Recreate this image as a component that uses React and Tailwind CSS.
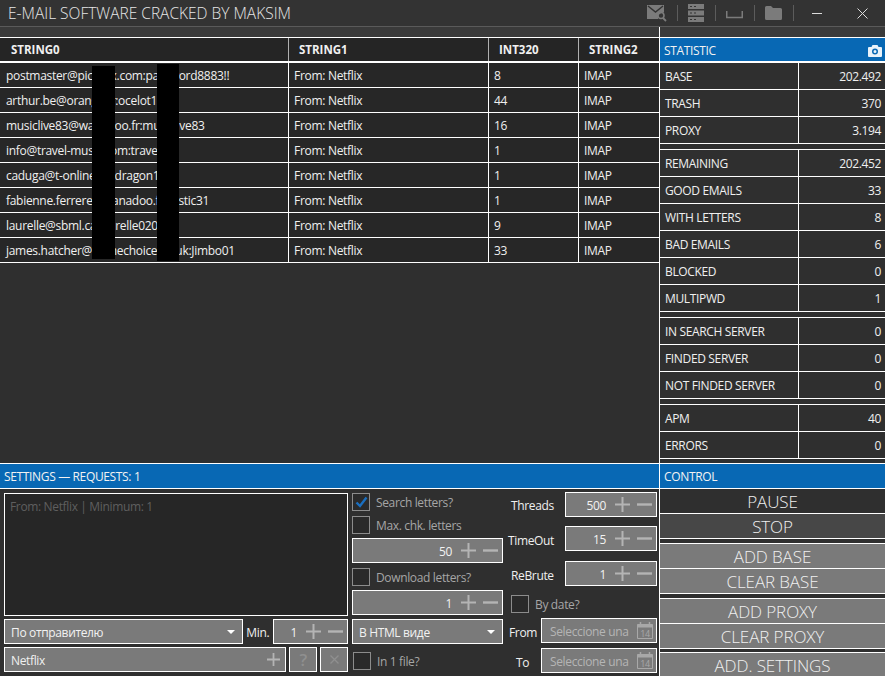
import React from 'react';

const font = { fontFamily: '"Open Sans", "Noto Sans", sans-serif' };

const rows = [
  ['postmaster@picxxxx.com:password8883!!', 'From: Netflix', '8', 'IMAP'],
  ['arthur.be@orange.fr:ocelot12', 'From: Netflix', '44', 'IMAP'],
  ['musiclive83@wanadoo.fr:musiclive83', 'From: Netflix', '16', 'IMAP'],
  ['info@travel-music.com:travel', 'From: Netflix', '1', 'IMAP'],
  ['caduga@t-online.de:dragon1', 'From: Netflix', '1', 'IMAP'],
  ['fabienne.ferrere@wanadoo.fr:rustic31', 'From: Netflix', '1', 'IMAP'],
  ['laurelle@sbml.ca:laurelle020', 'From: Netflix', '9', 'IMAP'],
  ['james.hatcher@homechoice.co.uk:Jimbo01', 'From: Netflix', '33', 'IMAP'],
];

const statGroups = [
  [['BASE', '202.492'], ['TRASH', '370'], ['PROXY', '3.194']],
  [['REMAINING', '202.452'], ['GOOD EMAILS', '33'], ['WITH LETTERS', '8'], ['BAD EMAILS', '6'], ['BLOCKED', '0'], ['MULTIPWD', '1']],
  [['IN SEARCH SERVER', '0'], ['FINDED SERVER', '0'], ['NOT FINDED SERVER', '0']],
  [['APM', '40'], ['ERRORS', '0']],
];

function Stepper({ value, className }) {
  return (
    <div className={`flex items-center justify-end h-[25px] border border-white bg-[#7a7a7a] text-[12px] text-[#f2f2f2] pr-[4px] ${className}`}>
      <span className="pt-[2px]">{value}</span>
      <svg width="15" height="15" viewBox="0 0 15 15" className="ml-[9px] shrink-0">
        <path d="M7.5 0v15M0 7.5h15" stroke="#b4b4b4" strokeWidth="2" />
      </svg>
      <svg width="15" height="15" viewBox="0 0 15 15" className="ml-[7px] shrink-0">
        <path d="M0 7.5h15" stroke="#b4b4b4" strokeWidth="2.4" />
      </svg>
    </div>
  );
}

function Check({ label, checked, className }) {
  return (
    <div className={`flex items-center h-[18px] text-[12px] text-[#a6a6a6] ${className}`}>
      <div className="w-[18px] h-[18px] border border-[#8c8c8c] bg-[#2a2a2a] flex items-center justify-center shrink-0">
        {checked && (
          <svg width="13" height="12" viewBox="0 0 13 12">
            <path d="M1.5 6.5 L5 10 L11.5 1.5" fill="none" stroke="#1a6fc0" strokeWidth="2.4" />
          </svg>
        )}
      </div>
      <span className="ml-[6px] pt-[2px]">{label}</span>
    </div>
  );
}

function Select({ label, className }) {
  return (
    <div className={`flex items-center justify-between h-[25px] border border-white bg-[#7a7a7a] text-[12px] text-[#f2f2f2] pl-[6px] pr-[7px] ${className}`}>
      <span className="pt-[2px]">{label}</span>
      <div className="w-0 h-0 border-l-[4px] border-r-[4px] border-t-[4px] border-l-transparent border-r-transparent border-t-white" />
    </div>
  );
}

function CalendarIcon() {
  return (
    <svg width="16" height="17" viewBox="0 0 16 17" className="shrink-0">
      <path d="M.5 2.5h15v14H.5z" fill="none" stroke="#a8a8a8" />
      <path d="M.5 2.5h15v3H.5z" fill="#a8a8a8" />
      <path d="M3.5 0v3M12.5 0v3" stroke="#a8a8a8" strokeWidth="1.5" />
      <text x="8" y="14.5" textAnchor="middle" fontSize="9" fill="#a8a8a8" fontFamily="Open Sans">14</text>
    </svg>
  );
}

function DateInput({ className }) {
  return (
    <div className={`flex items-center justify-between w-[116px] h-[25px] border border-white bg-[#7a7a7a] text-[12px] text-[#b5b5b5] pl-[8px] pr-[3px] ${className}`}>
      <span className="whitespace-nowrap pt-[2px]">Seleccione una</span>
      <CalendarIcon />
    </div>
  );
}

function TitleIcons() {
  const c = '#7b7b7b';
  return (
    <div className="flex items-center">
      <svg width="20" height="18" viewBox="0 0 20 18" className="ml-[647px]">
        <path d="M0 1h17v7.5a5.5 5.5 0 0 0-6 6.5H0z" fill={c} />
        <path d="M1 2l7.5 6L16 2" fill="none" stroke="#333" strokeWidth="1.4" />
        <circle cx="14" cy="11.5" r="3" fill="none" stroke={c} strokeWidth="1.6" />
        <path d="M16 14l3 3" stroke={c} strokeWidth="1.8" />
      </svg>
      <div className="w-px h-[16px] bg-[#5c5c5c] ml-[10px]" />
      <svg width="16" height="18" viewBox="0 0 16 18" className="ml-[10px]">
        <rect y="0" width="16" height="5" fill={c} />
        <rect y="6.5" width="16" height="5" fill={c} />
        <rect y="13" width="16" height="5" fill={c} />
        <path d="M2 2.5h2M6 2.5h2M2 9h2M6 9h2M2 15.5h2M6 15.5h2" stroke="#333" strokeWidth="1" />
      </svg>
      <div className="w-px h-[16px] bg-[#5c5c5c] ml-[11px]" />
      <svg width="17" height="8" viewBox="0 0 17 8" className="ml-[10px] mt-[4px]">
        <path d="M.75 0v6.5h15.5V0" fill="none" stroke={c} strokeWidth="1.5" />
      </svg>
      <div className="w-px h-[16px] bg-[#5c5c5c] ml-[11px]" />
      <svg width="17" height="14" viewBox="0 0 17 14" className="ml-[10px]">
        <path d="M0 1.5A1.5 1.5 0 0 1 1.5 0H6l2 2h7.5A1.5 1.5 0 0 1 17 3.5v9a1.5 1.5 0 0 1-1.5 1.5h-14A1.5 1.5 0 0 1 0 12.5z" fill={c} />
      </svg>
      <div className="w-px h-[16px] bg-[#5c5c5c] ml-[11px]" />
      <div className="w-[10px] h-px bg-[#dcdcdc] ml-[18px]" />
      <svg width="11" height="11" viewBox="0 0 11 11" className="ml-[35px]">
        <path d="M.5.5l10 10M10.5.5l-10 10" stroke="#dcdcdc" strokeWidth="1" />
      </svg>
    </div>
  );
}

function BlueBar({ children }) {
  return (
    <div className="flex items-center justify-between bg-[#0868b4] text-[12px] text-[#f2f2f2] pl-[4px] pt-[2px] h-[24px] shrink-0">
      {children}
    </div>
  );
}

function CtrlButton({ label, className }) {
  return (
    <div className={`flex items-center justify-center border-b border-white pt-[2px] text-[17px] font-light tracking-[-0.1px] text-[#f0f0f0] whitespace-nowrap ${className}`}>
      {label}
    </div>
  );
}

export default function App() {
  return (
    <div className="w-[885px] h-[676px] overflow-hidden bg-[#2f2f2f] relative tracking-[-0.35px]" style={font}>
      {/* title bar */}
      <div className="relative flex items-center h-[27px] bg-[#333333] border-b border-[#5a5a5a]">
        <span className="absolute left-[8px] top-[2px] text-[15.5px] font-light tracking-normal text-[#e6e6e6] whitespace-nowrap">E-MAIL SOFTWARE CRACKED BY MAKSIM</span>
        <TitleIcons />
      </div>

      <div className="flex h-[649px]">
        {/* left */}
        <div className="flex flex-col w-[660px] shrink-0 border-r border-white">
          <div className="h-[10px] bg-[#3a3a3a] shrink-0" />
          <div className="h-[426px] shrink-0 bg-[#2f2f2f] border-t border-white">
            <div className="flex h-[25px] bg-[#252525] border-b-[2px] border-white text-[11.5px] font-bold tracking-normal text-[#f0f0f0] items-center">
              <div className="w-[289px] pl-[11px] h-full flex items-center border-r border-[#b0b0b0]">STRING0</div>
              <div className="w-[200px] pl-[10px] h-full flex items-center border-r border-[#b0b0b0]">STRING1</div>
              <div className="w-[90px] pl-[10px] h-full flex items-center border-r border-[#b0b0b0]">INT320</div>
              <div className="flex-1 pl-[10px] h-full flex items-center">STRING2</div>
            </div>
            {rows.map((r) => (
              <div key={r[0]} className="flex h-[25px] bg-[#272727] border-b border-white text-[12px] tracking-[-0.3px] text-[#f0f0f0] items-center whitespace-nowrap">
                <div className="w-[289px] pl-[6px] pt-[2px] h-full flex items-center border-r border-white">{r[0]}</div>
                <div className="w-[200px] pl-[5px] pt-[2px] h-full flex items-center border-r border-white">{r[1]}</div>
                <div className="w-[90px] pl-[5px] pt-[2px] h-full flex items-center border-r border-white">{r[2]}</div>
                <div className="flex-1 pl-[5px] pt-[2px] h-full flex items-center">{r[3]}</div>
              </div>
            ))}
          </div>

          <div className="border-t border-white shrink-0">
            <BlueBar>SETTINGS — REQUESTS: 1</BlueBar>
          </div>

          <div className="flex flex-1 border-t border-white pt-[4px] pl-[4px] text-[12px] text-[#f0f0f0]">
            {/* requests column */}
            <div className="w-[344px] shrink-0">
              <div className="h-[123px] border border-white bg-[#262626] text-[#5f5f5f] px-[5px] py-[4px]">From: Netflix | Minimum: 1</div>
              <div className="flex items-center mt-[3px]">
                <Select label="По отправителю" className="w-[240px]" />
                <span className="ml-[3px] w-[27px] pt-[3px]">Min.</span>
                <Stepper value="1" className="w-[75px]" />
              </div>
              <div className="flex items-center mt-[3px]">
                <div className="flex items-center justify-between w-[283px] h-[25px] border border-white bg-[#7a7a7a] pl-[6px] pr-[5px]">
                  <span className="pt-[3px]">Netflix</span>
                  <svg width="13" height="13" viewBox="0 0 13 13">
                    <path d="M6.5 0v13M0 6.5h13" stroke="#b4b4b4" strokeWidth="1.8" />
                  </svg>
                </div>
                <div className="w-[28px] h-[25px] ml-[3px] border border-white bg-[#7a7a7a] text-[#8f8f8f] text-[17px] font-semibold flex items-center justify-center">?</div>
                <div className="w-[28px] h-[25px] ml-[3px] border border-white bg-[#7a7a7a] flex items-center justify-center">
                  <svg width="9" height="9" viewBox="0 0 9 9">
                    <path d="M.5.5l8 8M8.5.5l-8 8" stroke="#8f8f8f" strokeWidth="1.3" />
                  </svg>
                </div>
              </div>
            </div>

            {/* letters column */}
            <div className="w-[151px] ml-[4px] shrink-0">
              <Check label="Search letters?" checked />
              <Check label="Max. chk. letters" className="mt-[5px]" />
              <Stepper value="50" className="mt-[4px]" />
              <Check label="Download letters?" className="mt-[5px]" />
              <Stepper value="1" className="mt-[4px]" />
              <Select label="В HTML виде" className="mt-[4px]" />
              <Check label="In 1 file?" className="mt-[8px] ml-px" />
            </div>

            {/* limits column */}
            <div className="w-[149px] ml-[5px] shrink-0">
              <div className="flex items-center -mt-[1px]">
                <span className="w-[57px] pl-[3px] pt-[2px]">Threads</span>
                <Stepper value="500" className="w-[92px]" />
              </div>
              <div className="flex items-center mt-[9px]">
                <span className="w-[57px] pt-[4px]">TimeOut</span>
                <Stepper value="15" className="w-[92px]" />
              </div>
              <div className="flex items-center mt-[10px]">
                <span className="w-[57px] pl-[3px] pt-[4px]">ReBrute</span>
                <Stepper value="1" className="w-[92px]" />
              </div>
              <Check label="By date?" className="mt-[9px] ml-[3px]" />
              <div className="flex items-center mt-[5px]">
                <span className="w-[33px] pl-px pt-[5px]">From</span>
                <DateInput />
              </div>
              <div className="flex items-center mt-[5px]">
                <span className="w-[33px] pl-[8px] pt-[4px]">To</span>
                <DateInput />
              </div>
            </div>
          </div>
        </div>

        {/* right */}
        <div className="flex flex-col flex-1 min-w-0">
          <div className="h-[10px] bg-[#3a3a3a] shrink-0" />
          <div className="border-t border-white h-[426px] shrink-0">
            <div className="flex items-center justify-between bg-[#0868b4] text-[12px] text-[#f2f2f2] pl-[4px] pr-[3px] pt-[2px] h-[23px]">
              <span>STATISTIC</span>
              <svg width="14" height="12" viewBox="0 0 14 12">
                <path fillRule="evenodd" d="M4.5 0h5l1 2H13a1 1 0 0 1 1 1v8a1 1 0 0 1-1 1H1a1 1 0 0 1-1-1V3a1 1 0 0 1 1-1h2.5zM7 3.5a3 3 0 1 0 0 6 3 3 0 0 0 0-6zM7 5a1.5 1.5 0 1 1 0 3 1.5 1.5 0 0 1 0-3z" fill="#e8f2fa" />
              </svg>
            </div>
            {statGroups.map((group, i) => (
              <div key={i} className={i === 0 ? 'border-t-[2px] border-white' : 'border-t border-white mt-[5px]'}>
                {group.map(([k, v]) => (
                  <div key={k} className="flex h-[27px] border-b border-white bg-[#2f2f2f] text-[12px] text-[#f0f0f0] items-center whitespace-nowrap">
                    <div className="w-[139px] h-full pl-[5px] pt-[2px] flex items-center border-r border-white">{k}</div>
                    <div className="flex-1 h-full pr-[4px] pt-[2px] flex items-center justify-end">{v}</div>
                  </div>
                ))}
              </div>
            ))}
          </div>
          <div className="border-t border-white shrink-0">
            <BlueBar>CONTROL</BlueBar>
          </div>
          <div className="border-t border-white flex-1">
            <CtrlButton label="PAUSE" className="h-[25px] bg-[#2f2f2f]" />
            <CtrlButton label="STOP" className="h-[25px] bg-[#474747]" />
            <CtrlButton label="ADD BASE" className="h-[26px] bg-[#7a7a7a] border-t mt-[4px]" />
            <CtrlButton label="CLEAR BASE" className="h-[25px] bg-[#7a7a7a]" />
            <CtrlButton label="ADD PROXY" className="h-[26px] bg-[#7a7a7a] border-t mt-[4px]" />
            <CtrlButton label="CLEAR PROXY" className="h-[25px] bg-[#7a7a7a]" />
            <CtrlButton label="ADD. SETTINGS" className="h-[26px] bg-[#7a7a7a] border-t mt-[3px]" />
          </div>
        </div>
      </div>

      {/* redaction bars over the email column */}
      <div className="absolute left-[92px] top-[66px] w-[23px] h-[193px] bg-black" />
      <div className="absolute left-[157px] top-[64px] w-[22px] h-[197px] bg-black" />
    </div>
  );
}
